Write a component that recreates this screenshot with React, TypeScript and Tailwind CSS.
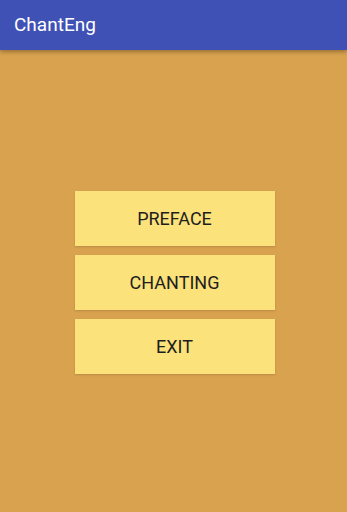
export default function App() {
  const items = ["PREFACE", "CHANTING", "EXIT"];
  return (
    <div className="flex h-[512px] w-[347px] flex-col bg-[#d9a24f] font-['Roboto',sans-serif]">
      <header className="relative z-10 flex h-[50px] shrink-0 items-center bg-[#3f51b5] px-[14px] shadow-[0_2px_4px_rgba(0,0,0,0.3)]">
        <h1 className="text-[19px] text-white">ChantEng</h1>
      </header>
      <main className="flex flex-1 flex-col items-center pt-[141px] pl-[2px]">
        <div className="flex flex-col gap-[9px]">
          {items.map((label) => (
            <button
              key={label}
              className="flex h-[55px] w-[200px] items-center justify-center bg-[#fbe27a] text-[18px] text-[#1e1e1e] shadow-[0_1px_2px_rgba(0,0,0,0.15)]"
            >
              {label}
            </button>
          ))}
        </div>
      </main>
    </div>
  );
}
